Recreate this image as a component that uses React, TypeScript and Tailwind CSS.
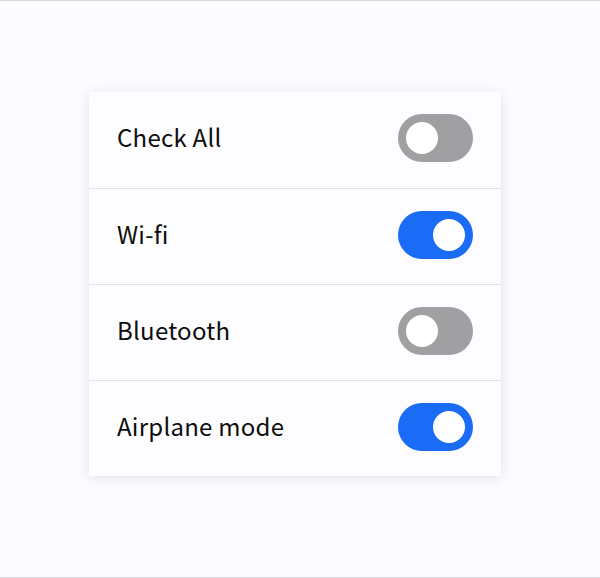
import React, { useState } from "react";

function Toggle({ on, onClick }: { on: boolean; onClick: () => void }) {
  return (
    <button
      onClick={onClick}
      className={`flex h-[48px] w-[75px] shrink-0 items-center rounded-full px-[8px] ${
        on ? "justify-end bg-[#1a6cf6]" : "justify-start bg-[#a09fa2]"
      }`}
    >
      <span className="block h-[32px] w-[32px] rounded-full bg-white" />
    </button>
  );
}

export default function App() {
  const [items, setItems] = useState([
    { label: "Check All", on: false },
    { label: "Wi-fi", on: true },
    { label: "Bluetooth", on: false },
    { label: "Airplane mode", on: true },
  ]);
  return (
    <div
      className="flex h-[578px] w-[600px] items-start justify-center border-y border-[#d8d7da] bg-[#fcfbfd] pt-[91px]"
      style={{ fontFamily: '"Noto Sans CJK KR", "Noto Sans", sans-serif' }}
    >
      <div className="ml-[-10px] w-[412px] bg-[#fdfcfe] shadow-[0_2px_12px_rgba(0,0,0,0.10)]">
        {items.map((it, i) => (
          <div
            key={it.label}
            className={`flex h-[96px] items-center justify-between px-[28px] pb-[4px] ${
              i > 0 ? "border-t border-[#e4e3e6]" : ""
            }`}
          >
            <span className="mb-[2px] text-[24px] leading-none tracking-[0.25px] text-[#0d0d0d]">
              {it.label}
            </span>
            <Toggle
              on={it.on}
              onClick={() =>
                setItems(items.map((x, j) => (j === i ? { ...x, on: !x.on } : x)))
              }
            />
          </div>
        ))}
      </div>
    </div>
  );
}
